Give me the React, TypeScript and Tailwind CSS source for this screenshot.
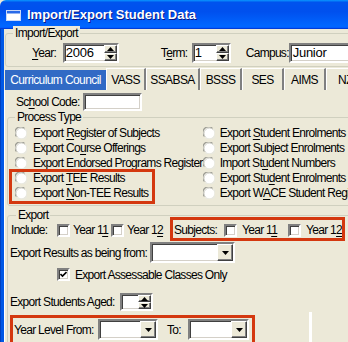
import React from "react";

const U = ({ children }: { children: React.ReactNode }) => <span className="underline underline-offset-[2px]">{children}</span>;

const sunken =
  "border-2 border-t-[#808080] border-l-[#808080] border-b-white border-r-white shadow-[inset_1px_1px_0_#404040,inset_-1px_-1px_0_#d4d0c8] bg-white";
const raised =
  "bg-[#ece9d8] border border-t-white border-l-white border-b-[#404040] border-r-[#404040] shadow-[inset_-1px_-1px_0_#808080]";

function Radio() {
  return (
    <svg width="12" height="12" viewBox="0 0 12 12" className="shrink-0">
      <circle cx="6" cy="6" r="5.5" fill="#fff" />
      <path d="M1.5 9.5 A5.2 5.2 0 0 1 9.5 1.5" stroke="#9c9c94" strokeWidth="1.2" fill="none" />
      <path d="M2.6 10.1 A5 5 0 0 1 10.1 2.6" stroke="#d0d0c8" strokeWidth="1" fill="none" />
      <path d="M10.5 2.5 A5.2 5.2 0 0 1 2.5 10.5" stroke="#e8e8e0" strokeWidth="1.2" fill="none" />
    </svg>
  );
}

function Check({ checked }: { checked?: boolean }) {
  return (
    <div className={`w-[13px] h-[13px] shrink-0 flex items-center justify-center ${sunken}`}>
      {checked && (
        <svg width="7" height="7" viewBox="0 0 7 7">
          <path d="M0.5 3 L2.5 5 L6.5 1" stroke="#000" strokeWidth="1.6" fill="none" />
        </svg>
      )}
    </div>
  );
}

function Arrow({ up }: { up?: boolean }) {
  return (
    <svg width="7" height="4" viewBox="0 0 7 4">
      <path d={up ? "M0 4 L3.5 0 L7 4 Z" : "M0 0 L7 0 L3.5 4 Z"} fill="#000" />
    </svg>
  );
}

function Spinner({ w, h, value }: { w: string; h: string; value?: string }) {
  return (
    <div className={`${w} ${h} ${sunken} flex shrink-0`}>
      <div className="flex-1 pl-[1px] leading-[16px] text-[13px] tracking-[-0.3px]">{value}</div>
      <div className="w-[13px] flex flex-col">
        <div className={`flex-1 flex items-center justify-center ${raised}`}>
          <Arrow up />
        </div>
        <div className={`flex-1 flex items-center justify-center ${raised}`}>
          <Arrow />
        </div>
      </div>
    </div>
  );
}

function Combo({ w }: { w: string }) {
  return (
    <div className={`${w} h-[21px] ${sunken} flex justify-end shrink-0`}>
      <div className={`w-[16px] h-full flex items-center justify-center ${raised}`}>
        <Arrow />
      </div>
    </div>
  );
}

function GroupLabel({ left, children }: { left: string; children: React.ReactNode }) {
  return (
    <span className={`absolute top-[-8px] ${left} px-[2px] bg-[#ece9d8] leading-[14px]`}>{children}</span>
  );
}

const tabs = [
  { label: "Curriculum Council", w: "w-[101px]", active: true },
  { label: "VASS", w: "w-[40px]" },
  { label: "SSABSA", w: "w-[54px]" },
  { label: "BSSS", w: "w-[42px]" },
  { label: "SES", w: "w-[42px]" },
  { label: "AIMS", w: "w-[42px]" },
  { label: "NZ", w: "w-[40px]" },
];

export default function App() {
  return (
    <div className="w-[348px] h-[342px] overflow-hidden bg-[#ece9d8] flex flex-col font-['Liberation_Sans',Arial,sans-serif] text-[12px] tracking-[-0.7px] text-black relative">
      {/* Title bar */}
      <div className="h-[29px] shrink-0 flex items-center rounded-tl-[6px] bg-[linear-gradient(180deg,#0997ff,#0053ee_8%,#0050ee_40%,#06f_88%,#06f_93%,#005bff_95%,#003dd7_96%,#003dd7)]">
        <svg width="15" height="11" viewBox="0 0 15 11" className="ml-[6px] mt-[1px]">
          <rect x="0.5" y="0.5" width="14" height="10" fill="#fff" stroke="#c8d8f8" />
          <rect x="1" y="1" width="13" height="2.5" fill="#2a6ae8" />
        </svg>
        <span className="ml-[6px] text-white font-bold text-[13px] tracking-normal [text-shadow:1px_1px_0_#0a1883]">
          Import/Export Student Data
        </span>
      </div>

      <div className="flex flex-1 min-h-0">
        <div className="w-[4px] shrink-0 bg-[#0058e6] border-l border-[#0040c0]" />
        <div className="flex-1 min-w-0 flex flex-col">
          {/* Import/Export group */}
          <div className="relative mt-[4px] ml-[1px] h-[34px] w-[360px] shrink-0 border border-[#d0d0bf] rounded-[3px]">
            <GroupLabel left="left-[7px]">Import/Export</GroupLabel>
            <div className="flex items-center pt-[9px] h-[29px]">
              <span className="ml-[26px] w-[33px]">
                <U>Y</U>ear:
              </span>
              <Spinner w="w-[56px]" h="h-[20px]" value="2006" />
              <span className="ml-[42px] w-[33px]">
                T<U>e</U>rm:
              </span>
              <Spinner w="w-[39px]" h="h-[20px]" value="1" />
              <span className="ml-[15px] w-[45px]">Campus:</span>
              <div className={`w-[80px] h-[20px] ${sunken} pl-[2px] leading-[16px] text-[13px] tracking-[-0.3px]`}>Junior</div>
            </div>
          </div>

          {/* Tabs */}
          <div className="mt-[1px] ml-[1px] h-[22px] flex shrink-0 text-[12px] tracking-[-0.6px]">
            {tabs.map((t) =>
              t.active ? (
                <div key={t.label} className={`${t.w} shrink-0 mt-[2px] bg-[#316ac5] text-white whitespace-nowrap flex items-center justify-center`}>
                  {t.label}
                </div>
              ) : (
                <div
                  key={t.label}
                  className={`${t.w} shrink-0 border-l border-white border-r-2 border-r-[#808080] border-t border-t-white whitespace-nowrap flex items-center justify-center pt-[1px]`}
                >
                  {t.label}
                </div>
              )
            )}
          </div>

          {/* Tab page */}
          <div className="flex-1 min-h-0 flex flex-col border-l border-white relative">
            <div className="flex items-center mt-[3px] h-[18px] shrink-0">
              <span className="ml-[11px] w-[67px] whitespace-nowrap">
                Sc<U>h</U>ool Code:
              </span>
              <div className={`w-[59px] h-[18px] ${sunken}`} />
            </div>

            {/* Process Type */}
            <div className="relative mt-[6px] ml-[2px] h-[89px] w-[360px] shrink-0 border border-[#d0d0bf] rounded-[3px]">
              <GroupLabel left="left-[7px]">Process Type</GroupLabel>
              <div className="flex pt-[7px]">
                <div className="w-[199px] pl-[7px] flex flex-col">
                  {[
                    <>Export <U>R</U>egister of Subjects</>,
                    <>Export Co<U>u</U>rse Offerings</>,
                    <>Export E<U>n</U>dorsed Programs Register</>,
                    <>Export <U>T</U>EE Results</>,
                    <>Export <U>N</U>on-TEE Results</>,
                  ].map((l, i) => (
                    <div key={i} className="h-[15px] flex items-center gap-[6px] whitespace-nowrap">
                      <Radio />
                      <span>{l}</span>
                    </div>
                  ))}
                </div>
                <div className="flex flex-col">
                  {[
                    <>Export <U>S</U>tudent Enrolments</>,
                    <>Export Subject Enrolments</>,
                    <>Import St<U>u</U>dent Numbers</>,
                    <>Export Stu<U>d</U>ent Enrolments</>,
                    <>Export W<U>A</U>CE Student Register</>,
                  ].map((l, i) => (
                    <div key={i} className="h-[15px] flex items-center gap-[5px] whitespace-nowrap">
                      <Radio />
                      <span>{l}</span>
                    </div>
                  ))}
                </div>
              </div>
            </div>

            {/* Export */}
            <div className="relative mt-[9px] ml-[2px] h-[150px] w-[360px] shrink-0 border border-[#d0d0bf] rounded-[3px]">
              <GroupLabel left="left-[8px]">Export</GroupLabel>
              <div className="flex items-center h-[16px] mt-[6px] pl-[3px] whitespace-nowrap">
                <span className="w-[46px]">Include:</span>
                <Check />
                <span className="ml-[3px] w-[38px]">
                  Year 1<U>1</U>
                </span>
                <Check />
                <span className="ml-[3px] w-[47px]">
                  Year 1<U>2</U>
                </span>
                <span className="w-[50px]">Subjects:</span>
                <Check />
                <span className="ml-[5px] w-[46px]">
                  Year 1<U>1</U>
                </span>
                <Check />
                <span className="ml-[5px]">
                  Year 1<U>2</U>
                </span>
              </div>
              <div className="flex items-center mt-[4px] pl-[2px] whitespace-nowrap">
                <span className="w-[140px]">Export Results as being from:</span>
                <Combo w="w-[85px]" />
              </div>
              <div className="flex items-center mt-[5px] pl-[49px] h-[13px] whitespace-nowrap">
                <Check checked />
                <span className="ml-[5px]">Export Assessable Classes Only</span>
              </div>
              <div className="flex items-center mt-[12px] pl-[2px] whitespace-nowrap">
                <span className="w-[110px]">Export Students Aged:</span>
                <Spinner w="w-[33px]" h="h-[18px]" />
              </div>
              <div className="flex items-center mt-[8px] pl-[6px] whitespace-nowrap">
                <span className="w-[84px]">Year Level From:</span>
                <Combo w="w-[60px]" />
                <span className="ml-[9px] w-[21px]">To:</span>
                <Combo w="w-[61px]" />
              </div>
            </div>
          </div>
        </div>
      </div>

      {/* annotation boxes */}
      <div className="absolute left-[9px] top-[169px] w-[146px] h-[35px] border-[3px] border-[#d4380f]" />
      <div className="absolute left-[170px] top-[217px] w-[175px] h-[24px] border-[3px] border-[#d4380f]" />
      <div className="absolute left-[10px] top-[315px] w-[245px] h-[40px] border-[3px] border-[#d4380f]" />
      <div className="absolute left-[309px] top-[312px] w-[3px] h-[40px] bg-white" />
    </div>
  );
}
